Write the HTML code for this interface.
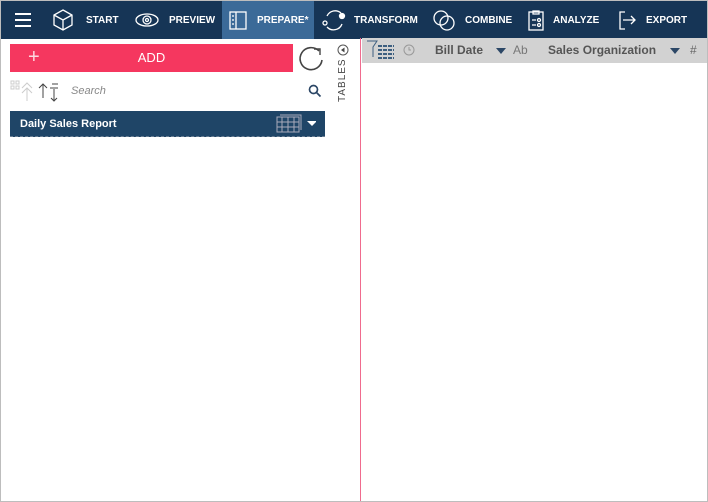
<!DOCTYPE html>
<html><head><style>
*{margin:0;padding:0;box-sizing:border-box}
body{width:708px;height:502px;position:relative;background:#fff;font-family:"Liberation Sans",sans-serif;overflow:hidden}
.frame{position:absolute;left:0;top:0;width:708px;height:502px;border:1px solid #bdbdbd}
.nav{position:absolute;left:1px;top:1px;width:706px;height:38px;background:#163556}
.nav span{position:absolute;top:14px;color:#fff;font-size:10px;font-weight:bold;letter-spacing:0}
.act{position:absolute;left:221px;top:0;width:92px;height:38px;background:#3b6a98}
.add{position:absolute;left:10px;top:44px;width:283px;height:28px;background:#f5375f;color:#fff;font-size:13px;text-align:center;line-height:28px}
.bar{position:absolute;left:10px;top:111px;width:315px;height:26px;background:#1f4567;border-bottom:1px dashed #6b7f94}
.bar b{position:absolute;left:10px;top:7px;color:#fff;font-size:11px}
.hdr{position:absolute;left:362px;top:38px;width:345px;height:25px;background:#d2d2d2}
.hdr span{position:absolute;top:5px;font-size:12px;color:#555}
.div{position:absolute;left:360px;top:38px;width:1px;height:463px;background:#f06b8e}
</style></head><body>
<div class="nav">
 <div class="act"></div>
 <svg width="706" height="38" style="position:absolute;left:0;top:0" fill="none" stroke="#fff" stroke-width="1.3">
  <path d="M14 13h16M14 19h16M14 25h16" stroke-width="2"/>
  <path d="M62 9l9 5v10l-9 5-9-5V14z M53 14l9 5 9-5 M62 19v10"/>
  <ellipse cx="146" cy="19" rx="11" ry="6"/><circle cx="146" cy="19" r="4"/><circle cx="146" cy="19" r="1.5"/>
  <rect x="229" y="11" width="16" height="17"/><path d="M235 11v17M231 15h2M231 19h2M231 23h2"/>
  <path d="M326 15a9 9 0 0 1 14-3 M341 23a9 9 0 0 1-15 3"/><circle cx="341" cy="15" r="2.5" fill="#fff"/><circle cx="324" cy="22" r="2"/>
  <circle cx="440" cy="17" r="7"/><circle cx="446" cy="22" r="7"/>
  <rect x="528" y="11" width="14" height="18"/><path d="M532 10h6v3h-6z M531 19h4M531 24h4"/><circle cx="538" cy="19" r="1.5"/><circle cx="538" cy="24" r="1.5"/>
  <path d="M624 11h-5v17h5 M622 19h12 M630 15l4 4-4 4"/>
 </svg>
 <span style="left:85px">START</span><span style="left:168px">PREVIEW</span><span style="left:256px">PREPARE*</span>
 <span style="left:353px">TRANSFORM</span><span style="left:464px">COMBINE</span><span style="left:552px">ANALYZE</span><span style="left:645px">EXPORT</span>
</div>
<div class="add"><span style="position:absolute;left:18px;top:-1px;font-size:20px;font-weight:normal;opacity:.8">+</span>ADD</div>
<svg width="30" height="30" style="position:absolute;left:297px;top:44px" fill="none" stroke="#444" stroke-width="1.6"><path d="M22 7a11 11 0 1 0 3 9"/><path d="M17 5h6v6" stroke-width="1.4"/></svg>
<svg width="12" height="12" style="position:absolute;left:337px;top:44px"><circle cx="6" cy="6" r="5" fill="none" stroke="#555"/><path d="M7.5 3.5v5L4 6z" fill="#444"/></svg>
<div style="position:absolute;left:337px;top:64px;transform-origin:0 0;transform:rotate(-90deg) translate(-38px,0);font-size:10px;color:#444;letter-spacing:1px;width:40px">TABLES</div>
<svg width="60" height="24" style="position:absolute;left:10px;top:80px" fill="none" stroke="#ccc"><rect x="1" y="1" width="3" height="3"/><rect x="6" y="1" width="3" height="3"/><rect x="1" y="6" width="3" height="3"/><rect x="6" y="6" width="3" height="3"/><path d="M12 8l5-5 5 5M12 13l5-5 5 5M17 8v13"/><path d="M33 4v14M29 8l4-4 4 4M42 4h6M40 8h8M44 9v12M41 18l3 3 3-3" stroke="#444"/></svg>
<span style="position:absolute;left:71px;top:85px;font-size:11px;font-style:italic;color:#888">Search</span>
<svg width="14" height="14" style="position:absolute;left:308px;top:84px" fill="none" stroke="#2c4766" stroke-width="1.7"><circle cx="5.5" cy="5.5" r="4"/><path d="M8.5 8.5l4 4"/></svg>
<div class="bar"><b>Daily Sales Report</b>
 <svg width="40" height="20" style="position:absolute;left:266px;top:3px" fill="none" stroke="#aab"><rect x="1" y="3" width="22" height="15"/><path d="M1 8h22M1 13h22M6 3v15M12 3v15M18 3v15M4 1h21v15"/><path d="M31 7h10l-5 5z" fill="#fff" stroke="none"/></svg>
</div>
<div class="div"></div>
<div class="hdr">
 <svg width="60" height="25" style="position:absolute;left:4px;top:0" fill="none" stroke="#3d5f80"><path d="M1 3h10l-4 6v10" /><path d="M12 8h16M12 12h16M12 16h16M12 20h16" stroke-width="2" stroke-dasharray="4 1"/><circle cx="43" cy="12" r="5" stroke="#999"/><path d="M43 9v3h2" stroke="#999"/></svg>
 <span style="left:73px;font-weight:bold">Bill Date</span>
 <svg width="12" height="8" style="position:absolute;left:134px;top:10px"><path d="M0 0h10l-5 6z" fill="#2c4766"/></svg>
 <span style="left:151px;color:#777">Ab</span>
 <span style="left:186px;font-weight:bold">Sales Organization</span>
 <svg width="12" height="8" style="position:absolute;left:308px;top:10px"><path d="M0 0h10l-5 6z" fill="#2c4766"/></svg>
 <span style="left:328px;color:#666">#</span>
</div>
<div class="frame"></div>
</body></html>
